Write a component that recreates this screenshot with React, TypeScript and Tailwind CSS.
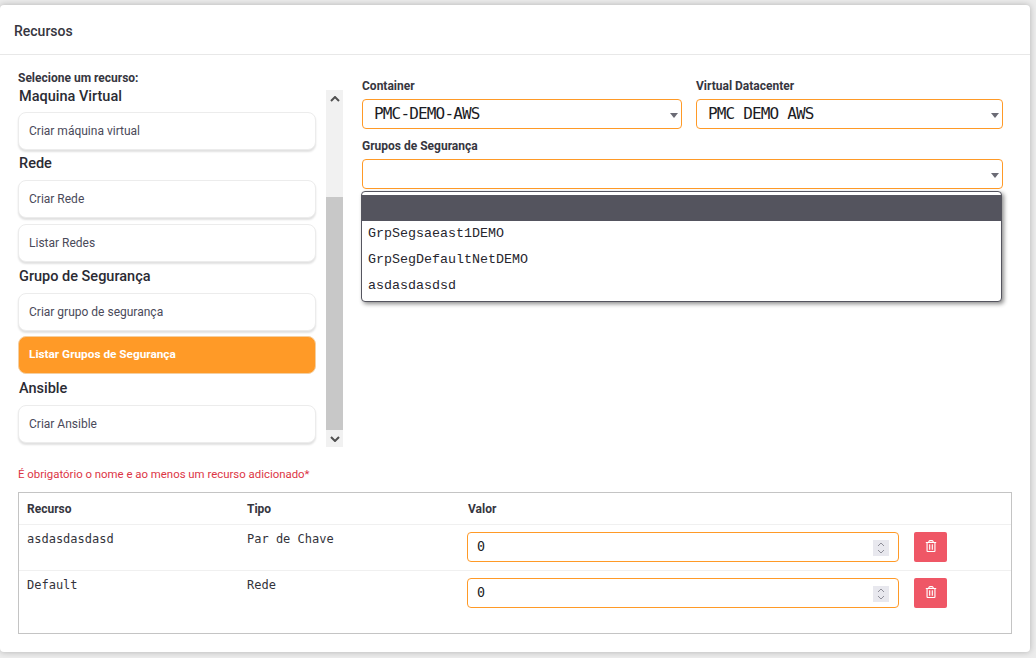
import { FaRegTrashAlt } from 'react-icons/fa'

const sans = { fontFamily: 'Roboto, sans-serif' }

const groups = [
  { title: 'Maquina Virtual', head: 'mt-[-8px] h-[30px] leading-[30px]', items: ['Criar máquina virtual'] },
  { title: 'Rede', head: 'h-[30px] leading-[27px]', items: ['Criar Rede', 'Listar Redes'] },
  { title: 'Grupo de Segurança', head: 'h-[31px] leading-[29px]', items: ['Criar grupo de segurança', 'Listar Grupos de Segurança'] },
  { title: 'Ansible', head: 'h-[31px] leading-[30px]', items: ['Criar Ansible'] }
]

const rows = [
  { name: 'asdasdasdasd', type: 'Par de Chave' },
  { name: 'Default', type: 'Rede' }
]

const Caret = () => (
  <svg width="8" height="5" viewBox="0 0 8 5" className="absolute right-[3px] top-[13px]">
    <path d="M0 0h8L4 5z" fill="#6b6b75" />
  </svg>
)

const FakeSelect = ({ value, className }: { value?: string; className: string }) => (
  <div
    className={`relative h-[30px] rounded-[4px] border border-[#ff9a27] bg-white pl-[11px] font-['DejaVu_Sans_Mono',monospace] text-[16px] leading-[28px] tracking-[-0.83px] text-[#1c1c24] ${className}`}
  >
    {value}
    <Caret />
  </div>
)

const Arrow = ({ up }: { up?: boolean }) => (
  <div className="flex h-[17px] items-center justify-center bg-[#f1f1f1]">
    <svg width="10" height="6" viewBox="0 0 10 6" fill="none">
      <path d={up ? 'M1 5l4-4 4 4' : 'M1 1l4 4 4-4'} stroke="#505050" strokeWidth="2" />
    </svg>
  </div>
)

const ResourceList = () => (
  <div className="w-[343px] shrink-0 pl-[18px] pt-[16px]">
    <p className="h-[19px] text-[12px] font-bold leading-[14px] text-[#363640]">Selecione um recurso:</p>
    <div className="flex">
      <div className="w-[298px]">
        {groups.map((g) => (
          <div key={g.title}>
            <h3 className={`pl-[1px] text-[14.5px] font-medium text-[#2b2b33] ${g.head}`}>{g.title}</h3>
            {g.items.map((item, j) => {
              const active = item === 'Listar Grupos de Segurança'
              return (
                <div
                  key={item}
                  className={`flex h-[38px] items-center rounded-[8px] px-[10px] ${j > 0 ? (active ? 'mt-[5px]' : 'mt-[6px]') : ''} ${
                    active
                      ? 'border border-[#f5cfa0] bg-[#ff9a27] text-[11.8px] font-bold text-white'
                      : 'border border-[#ececec] bg-white text-[12px] text-[#4a4a5a] shadow-[0_2px_2px_rgba(0,0,0,0.12)]'
                  }`}
                >
                  {item}
                </div>
              )
            })}
          </div>
        ))}
      </div>
      <div className="ml-[10px] flex h-[357px] w-[17px] flex-col bg-[#f1f1f1]">
        <Arrow up />
        <div className="mt-[90px] h-[233px] bg-[#c8c8c8]" />
        <div className="flex-1" />
        <Arrow />
      </div>
    </div>
  </div>
)

const Selects = () => (
  <div className="relative ml-[19px] mt-[24px] w-[641px] text-[12px]">
    <div className="flex gap-[14px]">
      <div className="w-[320px]">
        <p className="mb-[6px] h-[14px] font-bold leading-[14px] text-[#363640]">Container</p>
        <FakeSelect value="PMC-DEMO-AWS" className="w-full" />
      </div>
      <div className="flex-1">
        <p className="mb-[6px] h-[14px] font-bold leading-[14px] text-[#363640]">Virtual Datacenter</p>
        <FakeSelect value="PMC DEMO AWS" className="w-full" />
      </div>
    </div>
    <p className="mb-[6px] mt-[10px] h-[14px] font-bold leading-[14px] text-[#363640]">Grupos de Segurança</p>
    <FakeSelect className="w-full" />
    <div className="absolute left-[-1px] right-[1px] top-[112px] h-[111px] rounded-[4px] border border-[#55555f] bg-white pt-[3px] font-['Liberation_Mono',monospace] text-[13.33px] text-[#26262e] shadow-[2px_2px_4px_rgba(0,0,0,0.45)]">
      <div className="h-[26px] bg-[#54545e]" />
      {['GrpSegsaeast1DEMO', 'GrpSegDefaultNetDEMO', 'asdasdasdsd'].map((o) => (
        <div key={o} className="h-[26px] pl-[6px] leading-[26px]">
          {o}
        </div>
      ))}
    </div>
  </div>
)

const ResourceTable = () => (
  <div className="ml-[18px] mt-[11px] h-[142px] w-[994px] border border-[#c4c4c4] text-[12px]">
    <div className="flex h-[32px] items-center border-b border-[#f0f0f0] pl-[8px] font-bold leading-[14px] text-[#363640]">
      <span className="w-[220px]">Recurso</span>
      <span className="w-[221px]">Tipo</span>
      <span>Valor</span>
    </div>
    {rows.map((r) => (
      <div key={r.name} className="flex h-[46px] border-b border-[#f0f0f0] pl-[8px] pt-[7px] last:border-b-0">
        <span className="w-[220px] font-['DejaVu_Sans_Mono',monospace] text-[12px] leading-[14px] text-[#33333b]">{r.name}</span>
        <span className="w-[220px] font-['DejaVu_Sans_Mono',monospace] text-[12px] leading-[14px] text-[#33333b]">{r.type}</span>
        <div className="relative h-[30px] w-[432px] rounded-[4px] border border-[#ff9a27] pl-[9px] font-['DejaVu_Sans_Mono',monospace] text-[13.33px] leading-[28px] text-[#1c1c24]">
          0
          <div className="absolute right-[9px] top-[7px] flex h-[16px] w-[16px] items-center justify-center bg-[#e8e8ee]">
            <svg width="8" height="12" viewBox="0 0 8 12" fill="none" stroke="#8f8f99" strokeWidth="1">
              <path d="M1 4l3-3 3 3M1 8l3 3 3-3" />
            </svg>
          </div>
        </div>
        <button className="ml-[15px] flex h-[30px] w-[33px] items-center justify-center rounded-[2px] bg-[#ef5766] pb-[3px] text-[12px] text-white">
          <FaRegTrashAlt />
        </button>
      </div>
    ))}
  </div>
)

export default function App() {
  return (
    <div className="h-[658px] w-[1036px] overflow-hidden bg-[#ececec] pr-[6px] pt-[5px]" style={sans}>
      <div className="h-[647px] rounded-[4px] bg-white shadow-[0_0_6px_rgba(0,0,0,0.25)]">
        <div className="flex h-[50px] items-center border-b border-[#e8e8e8] pl-[14px] pt-[3px] text-[14px] font-medium text-[#363640]">
          Recursos
        </div>
        <div className="flex h-[402px]">
          <ResourceList />
          <Selects />
        </div>
        <p className="ml-[18px] mt-[10px] h-[14px] text-[11.4px] leading-[14px] text-[#dc3545]">
          É obrigatório o nome e ao menos um recurso adicionado*
        </p>
        <ResourceTable />
      </div>
    </div>
  )
}
